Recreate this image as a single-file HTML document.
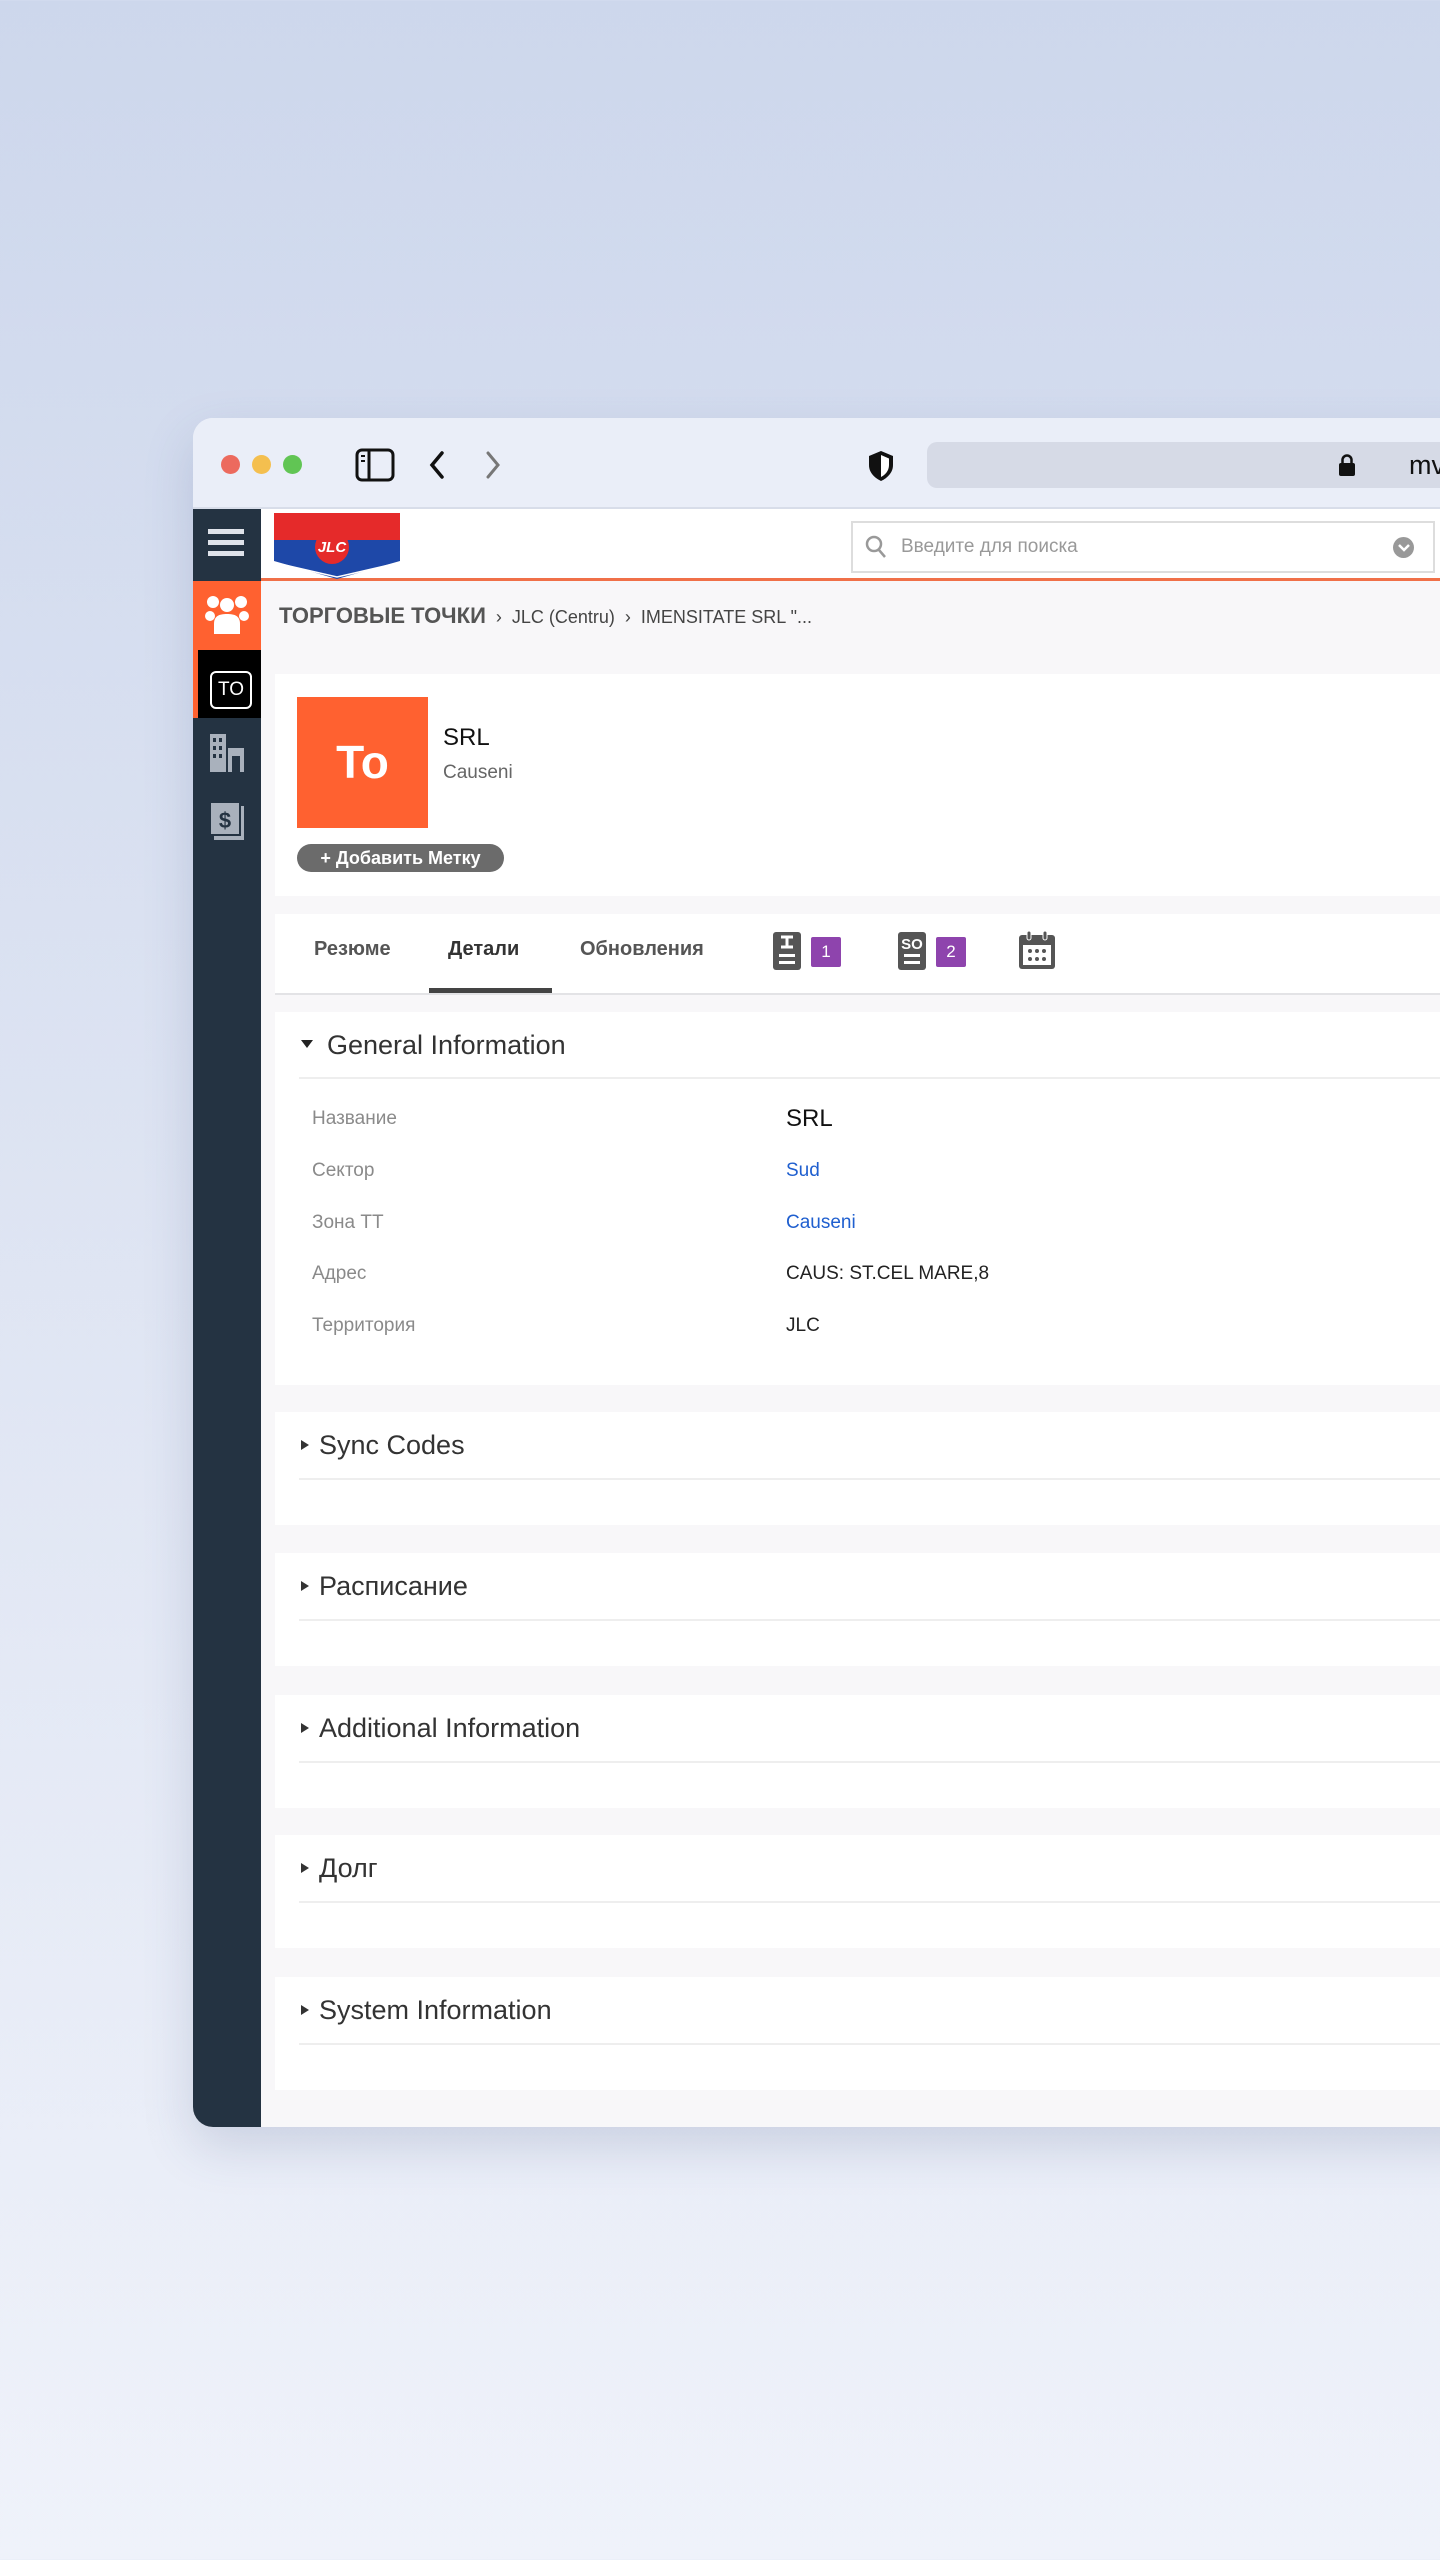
<!DOCTYPE html>
<html><head><meta charset="utf-8">
<style>
*{box-sizing:border-box;margin:0;padding:0}
body{width:1440px;height:2560px;overflow:hidden;background:linear-gradient(180deg,#cdd7ec 0%,#dfe5f3 50%,#eff2fa 100%);font-family:"Liberation Sans","Noto Sans CJK SC",sans-serif;position:relative}
.win{position:absolute;left:193px;top:418px;width:1300px;height:1709px;border-radius:20px;overflow:hidden;background:#f8f7f9;box-shadow:0 20px 50px rgba(60,80,130,.18)}
.tb{position:absolute;left:0;top:0;right:0;height:91px;background:#eaeef8;border-bottom:2px solid #d8dde9}
.dot{position:absolute;top:37px;width:19px;height:19px;border-radius:50%}
.addr{position:absolute;left:734px;top:24px;width:600px;height:46px;border-radius:10px;background:#d6dae6}
.nav{position:absolute;left:0;top:91px;width:68px;bottom:0;background:#243342}
.abs{position:absolute}
.card{position:absolute;left:82px;right:0;background:#fff}
.sec{position:absolute;left:82px;right:0;height:113px;background:#fff}
.sec .t{position:absolute;left:26px;top:18px;font-size:27px;color:#333}
.sec .t:before{content:"";display:inline-block;border-left:8px solid #333;border-top:5px solid transparent;border-bottom:5px solid transparent;margin-right:10px;vertical-align:4px}
.sec .ln{position:absolute;left:24px;right:0;top:66px;height:2px;background:#eee}
.lbl{position:absolute;font-size:19px;color:#8a8a8a}
.val{position:absolute;font-size:19px;color:#222}
</style></head><body>
<div class="win">
 <div class="tb">
  <div class="dot" style="left:28px;background:#ec6a5e"></div>
  <div class="dot" style="left:59px;background:#f4bf4f"></div>
  <div class="dot" style="left:90px;background:#61c554"></div>
  <svg class="abs" style="left:162px;top:30px" width="40" height="34" viewBox="0 0 40 34"><rect x="2" y="2" width="36" height="30" rx="5" fill="none" stroke="#111" stroke-width="3"/><line x1="14" y1="2" x2="14" y2="32" stroke="#111" stroke-width="3"/><rect x="6" y="7" width="4" height="2" fill="#111"/><rect x="6" y="12" width="4" height="2" fill="#111"/></svg>
  <svg class="abs" style="left:234px;top:32px" width="20" height="30"><path d="M15 3 L5 15 L15 27" fill="none" stroke="#111" stroke-width="3.5" stroke-linecap="round"/></svg>
  <svg class="abs" style="left:290px;top:32px" width="20" height="30"><path d="M5 3 L15 15 L5 27" fill="none" stroke="#777" stroke-width="3" stroke-linecap="round"/></svg>
  <svg class="abs" style="left:673px;top:31px" width="30" height="34" viewBox="0 0 30 34"><path d="M15 2 L27 7 V16 C27 24 21 29 15 32 C9 29 3 24 3 16 V7 Z" fill="#111"/><path d="M15 6 L23 9.5 V16 C23 22 19 26 15 28 Z" fill="#fff"/></svg>
  <div class="addr"></div>
  <svg class="abs" style="left:1145px;top:35px" width="18" height="24"><rect x="1" y="10" width="16" height="13" rx="2" fill="#111"/><path d="M4.5 10 V7 A4.5 4.5 0 0 1 13.5 7 V10" fill="none" stroke="#111" stroke-width="2.5"/></svg>
  <div class="abs" style="left:1216px;top:32px;font-size:27px;color:#111">mv</div>
 </div>
 <div class="nav">
  <div class="abs" style="left:15px;top:20px;width:36px;height:5px;background:#dfe3ea;box-shadow:0 11px 0 #dfe3ea,0 22px 0 #dfe3ea"></div>
  <div class="abs" style="left:0;top:72px;width:68px;height:69px;background:#ff6130"></div>
  <svg class="abs" style="left:12px;top:85px" width="44" height="42" viewBox="0 0 44 42"><g fill="#fff"><circle cx="8" cy="8" r="6"/><circle cx="36" cy="8" r="6"/><circle cx="22" cy="11" r="7"/><circle cx="5" cy="22" r="5"/><circle cx="39" cy="22" r="5"/><path d="M9 40 V30 C9 22 14 20 22 20 C30 20 35 22 35 30 V40 Z"/></g></svg>
  <div class="abs" style="left:0;top:141px;width:68px;height:68px;background:#000;border-left:5px solid #ff6130"></div>
  <div class="abs" style="left:17px;top:162px;width:42px;height:38px;border:2px solid #fff;border-radius:6px;color:#fff;font-size:19px;text-align:center;line-height:34px">TO</div>
  <svg class="abs" style="left:17px;top:225px" width="34" height="38"><g fill="#a9b1bc"><rect x="0" y="0" width="16" height="38"/><rect x="18" y="14" width="16" height="24"/></g><g fill="#243342"><rect x="3" y="4" width="3" height="4"/><rect x="9" y="4" width="3" height="4"/><rect x="3" y="12" width="3" height="4"/><rect x="9" y="12" width="3" height="4"/><rect x="3" y="20" width="3" height="4"/><rect x="9" y="20" width="3" height="4"/><rect x="22" y="22" width="8" height="16"/></g></svg>
  <svg class="abs" style="left:17px;top:293px" width="34" height="38"><rect x="4" y="4" width="30" height="34" fill="#a9b1bc"/><rect x="0" y="0" width="30" height="33" fill="#a9b1bc" stroke="#243342" stroke-width="2"/><text x="15" y="26" text-anchor="middle" font-size="22" font-weight="bold" fill="#243342" font-family="Liberation Sans">$</text></svg>
 </div>
 <div class="abs" style="left:68px;top:91px;right:0;height:72px;background:#fff;border-bottom:3px solid #f07048"></div>
 <svg class="abs" style="left:81px;top:95px" width="126" height="66" viewBox="0 0 126 66"><path d="M0 0 H126 V48 L63 66 L0 48 Z" fill="#1e48a8"/><rect x="0" y="0" width="126" height="27" fill="#e52a2a"/><path d="M2 50 L63 64 L124 50" fill="none" stroke="#fff" stroke-width="1.5"/><circle cx="58" cy="34" r="17" fill="#e52a2a"/><text x="58" y="39" text-anchor="middle" font-size="15" font-weight="bold" font-style="italic" fill="#fff" font-family="Liberation Sans">JLC</text></svg>
 <div class="abs" style="left:658px;top:103px;width:584px;height:52px;border:2px solid #ddd;background:#fff">
  <svg class="abs" style="left:12px;top:12px" width="22" height="24"><circle cx="9" cy="9" r="7" fill="none" stroke="#999" stroke-width="2.5"/><line x1="14" y1="15" x2="20" y2="22" stroke="#999" stroke-width="2.5"/></svg>
  <div class="abs" style="left:48px;top:13px;font-size:19px;color:#999">Введите для поиска</div>
  <div class="abs" style="left:540px;top:14px;width:21px;height:21px;border-radius:50%;background:#999"></div>
  <svg class="abs" style="left:544px;top:19px" width="14" height="12"><path d="M2 3 L7 8 L12 3" fill="none" stroke="#fff" stroke-width="2.5"/></svg>
 </div>
 <div class="abs" style="left:86px;top:185px;font-size:18px;color:#444;white-space:nowrap"><b style="font-size:22px;color:#555">ТОРГОВЫЕ ТОЧКИ</b> &nbsp;›&nbsp; JLC (Centru) &nbsp;›&nbsp; IMENSITATE SRL "...</div>
 <div class="card" style="top:256px;height:222px">
  <div class="abs" style="left:22px;top:23px;width:131px;height:131px;background:#ff6130;color:#fff;font-size:46px;font-weight:bold;text-align:center;line-height:131px">To</div>
  <div class="abs" style="left:168px;top:50px;font-size:24px;color:#111">SRL</div>
  <div class="abs" style="left:168px;top:88px;font-size:19px;color:#666">Causeni</div>
  <div class="abs" style="left:22px;top:170px;width:207px;height:28px;border-radius:14px;background:#6b6b6b;color:#fff;font-size:18px;font-weight:bold;text-align:center;line-height:28px">+ Добавить Метку</div>
 </div>
 <div class="card" style="top:496px;height:81px;border-bottom:2px solid #e3e3e6">
  <div class="abs" style="left:39px;top:24px;font-size:20px;font-weight:bold;color:#555">Резюме</div>
  <div class="abs" style="left:173px;top:24px;font-size:20px;font-weight:bold;color:#333">Детали</div>
  <div class="abs" style="left:154px;top:74px;width:123px;height:5px;background:#444"></div>
  <div class="abs" style="left:305px;top:24px;font-size:20px;font-weight:bold;color:#555">Обновления</div>
  <svg class="abs" style="left:498px;top:18px" width="28" height="38"><rect width="28" height="38" rx="3" fill="#555"/><path d="M8 5 H20 M14 5 V15 M8 15 H20" stroke="#fff" stroke-width="3"/><rect x="6" y="22" width="16" height="3" fill="#fff"/><rect x="6" y="29" width="16" height="3" fill="#fff"/></svg>
  <div class="abs" style="left:536px;top:23px;width:30px;height:30px;background:#8e44ad;border-radius:2px;color:#fff;font-size:17px;text-align:center;line-height:30px">1</div>
  <svg class="abs" style="left:623px;top:18px" width="28" height="38"><rect width="28" height="38" rx="3" fill="#555"/><text x="14" y="17" text-anchor="middle" font-size="15" font-weight="bold" fill="#fff" font-family="Liberation Sans">SO</text><rect x="6" y="22" width="16" height="3" fill="#fff"/><rect x="6" y="29" width="16" height="3" fill="#fff"/></svg>
  <div class="abs" style="left:661px;top:23px;width:30px;height:30px;background:#8e44ad;border-radius:2px;color:#fff;font-size:17px;text-align:center;line-height:30px">2</div>
  <svg class="abs" style="left:743px;top:16px" width="38" height="40" viewBox="0 0 38 40"><rect x="1" y="5" width="36" height="34" rx="3" fill="#555"/><rect x="5" y="15" width="28" height="20" fill="#fff"/><rect x="9" y="1" width="4" height="9" rx="2" fill="#555" stroke="#fff" stroke-width="1"/><rect x="25" y="1" width="4" height="9" rx="2" fill="#555" stroke="#fff" stroke-width="1"/><g fill="#555"><circle cx="12" cy="21" r="2"/><circle cx="19" cy="21" r="2"/><circle cx="26" cy="21" r="2"/><circle cx="12" cy="29" r="2"/><circle cx="19" cy="29" r="2"/><circle cx="26" cy="29" r="2"/></g></svg>
 </div>
 <div class="card" style="top:594px;height:373px">
  <div class="abs" style="left:26px;top:18px;font-size:27px;color:#333"><span style="display:inline-block;border-top:8px solid #222;border-left:6px solid transparent;border-right:6px solid transparent;margin-right:14px;vertical-align:6px"></span>General Information</div>
  <div class="abs" style="left:24px;right:0;top:65px;height:2px;background:#eee"></div>
  <div class="lbl" style="left:37px;top:96px">Название</div><div class="val" style="left:511px;top:93px;font-size:24px;color:#111">SRL</div>
  <div class="lbl" style="left:37px;top:148px">Сектор</div><div class="val" style="left:511px;top:148px;color:#1f5fcf">Sud</div>
  <div class="lbl" style="left:37px;top:200px">Зона ТТ</div><div class="val" style="left:511px;top:200px;color:#1f5fcf">Causeni</div>
  <div class="lbl" style="left:37px;top:251px">Адрес</div><div class="val" style="left:511px;top:251px">CAUS: ST.CEL MARE,8</div>
  <div class="lbl" style="left:37px;top:303px">Территория</div><div class="val" style="left:511px;top:303px">JLC</div>
 </div>
 <div class="sec" style="top:994px"><div class="t">Sync Codes</div><div class="ln"></div></div>
 <div class="sec" style="top:1135px"><div class="t">Расписание</div><div class="ln"></div></div>
 <div class="sec" style="top:1277px"><div class="t">Additional Information</div><div class="ln"></div></div>
 <div class="sec" style="top:1417px"><div class="t">Долг</div><div class="ln"></div></div>
 <div class="sec" style="top:1559px"><div class="t">System Information</div><div class="ln"></div></div>
</div>
</body></html>
